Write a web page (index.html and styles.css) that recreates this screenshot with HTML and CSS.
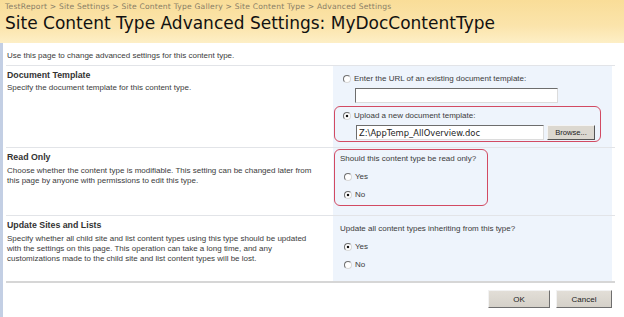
FILE: index.html
```html
<!DOCTYPE html>
<html lang="en">
<head>
    <meta charset="UTF-8">
    <title>Site Content Type Advanced Settings</title>
    <link rel="stylesheet" href="styles.css">
</head>
<body>
    <div class="header">
        <div class="crumbs">TestReport &gt; Site Settings &gt; Site Content Type Gallery &gt; Site Content Type &gt; Advanced Settings</div>
        <h1>Site Content Type Advanced Settings: MyDocContentType</h1>
    </div>

    <div class="main">
        <p class="intro">Use this page to change advanced settings for this content type.</p>

        <div class="section sec-template">
            <div class="label">
                <h3>Document Template</h3>
                <p>Specify the document template for this content type.</p>
            </div>
            <div class="control">
                <label class="opt"><input type="radio" name="tpl"> Enter the URL of an existing document template:</label>
                <div class="field-row"><input class="text url" type="text"></div>
                <div class="callout callout-upload">
                    <label class="opt"><input type="radio" name="tpl" checked> Upload a new document template:</label>
                    <div class="field-row">
                        <input class="text file" type="text" value="Z:\AppTemp_AllOverview.doc">
                        <button class="browse">Browse...</button>
                    </div>
                </div>
            </div>
        </div>

        <div class="section sec-readonly">
            <div class="label">
                <h3>Read Only</h3>
                <p>Choose whether the content type is modifiable. This setting can be changed later from this page by anyone with permissions to edit this type.</p>
            </div>
            <div class="control">
                <div class="callout callout-readonly">
                    <div class="question">Should this content type be read only?</div>
                    <label class="opt"><input type="radio" name="ro"> Yes</label>
                    <label class="opt"><input type="radio" name="ro" checked> No</label>
                </div>
            </div>
        </div>

        <div class="section sec-update">
            <div class="label">
                <h3>Update Sites and Lists</h3>
                <p>Specify whether all child site and list content types using this type should be updated with the settings on this page. This operation can take a long time, and any customizations made to the child site and list content types will be lost.</p>
            </div>
            <div class="control">
                <div class="question">Update all content types inheriting from this type?</div>
                <label class="opt"><input type="radio" name="upd" checked> Yes</label>
                <label class="opt"><input type="radio" name="upd"> No</label>
            </div>
        </div>

        <div class="actions">
            <button class="btn ok">OK</button>
            <button class="btn cancel">Cancel</button>
        </div>
    </div>
</body>
</html>
```

FILE: styles.css
```css
* {
    margin: 0;
    padding: 0;
    box-sizing: border-box;
}

body {
    font-family: 'Liberation Sans', Arial, sans-serif;
    font-size: 8px;
    color: #3b3b3b;
    background: #ffffff;
    width: 624px;
    height: 317px;
    overflow: hidden;
}

/* page title band */
.header {
    height: 43px;
    padding: 2px 0 0 5px;
    background: linear-gradient(#f9dd98 0%, #fbe4ab 60%, #fdefc6 100%);
}

.crumbs {
    font-family: 'DejaVu Sans', Verdana, sans-serif;
    font-size: 7.6px;
    letter-spacing: 0.2px;
    color: #8a7e66;
    line-height: 10px;
}

h1 {
    font-family: 'DejaVu Sans', Verdana, sans-serif;
    font-size: 17px;
    font-weight: normal;
    color: #111111;
    line-height: 22px;
    margin-top: 0;
}

.main {
    border-left: 3px solid #c3cfe4;
    padding-left: 3px;
    width: 615px;
    height: 274px;
}

.intro {
    height: 22px;
    padding-top: 8px;
    padding-left: 1px;
    line-height: 10px;
}

.section {
    display: grid;
    grid-template-columns: 327px 279px;
    border-top: 1px solid #e2e4e8;
}

.sec-template {
    height: 82px;
}

.sec-readonly {
    height: 68px;
}

.sec-update {
    height: 68px;
    border-bottom: 2px solid #d6d6d6;
}

.label {
    padding: 4px 16px 0 1px;
}

.label h3 {
    font-size: 8.8px;
    font-weight: bold;
    color: #333333;
    line-height: 10px;
    margin-bottom: 3px;
}

.label p {
    line-height: 10px;
}

.sec-readonly .label h3,
.sec-update .label h3 {
    margin-bottom: 4px;
}

.control {
    background: #eef4fc;
}

.sec-template .control {
    padding: 8px 12px 0 1px;
}

.opt {
    display: flex;
    align-items: center;
    gap: 3px;
    height: 10px;
    line-height: 10px;
}

.sec-template .opt {
    margin-left: 9px;
}

.field-row {
    display: flex;
    align-items: center;
    gap: 3px;
    margin: 4px 0 0 21px;
}

/* classic windows style radio */
.opt input {
    appearance: none;
    -webkit-appearance: none;
    width: 8px;
    height: 8px;
    border-radius: 50%;
    border: 1px solid;
    border-color: #6f6f6f #d8d8d8 #d8d8d8 #6f6f6f;
    background: #ffffff;
    flex: none;
}

.opt input:checked {
    background: radial-gradient(circle, #111111 0 1.4px, #ffffff 1.6px);
}

.text {
    height: 15px;
    border: 1px solid;
    border-color: #6d6d6d #dcdcdc #dcdcdc #6d6d6d;
    background: #ffffff;
    font-family: 'DejaVu Sans', Verdana, sans-serif;
    font-size: 8.4px;
    color: #222222;
    padding-left: 2px;
    outline: none;
}

.url {
    width: 203px;
}

.file {
    width: 188px;
}

.browse {
    width: 48px;
    height: 15px;
    font-family: 'Liberation Sans', Arial, sans-serif;
    font-size: 7.6px;
    color: #222222;
    background: #dcd8d0;
    border: 1px solid;
    border-color: #f4f4f4 #555555 #555555 #f4f4f4;
}

.callout {
    border: 1.3px solid #d24a62;
    border-radius: 6px;
}

.callout-upload {
    margin-top: 3px;
    width: 267px;
    height: 36px;
    padding-top: 4px;
}

.callout-upload .opt {
    margin-left: 8px;
}

.callout-upload .field-row {
    margin-left: 21px;
}

.callout-readonly {
    width: 154px;
    height: 57px;
    margin: 1px 0 0 1px;
    padding: 4px 0 0 5px;
}

.question {
    line-height: 10px;
}

.callout-readonly .opt,
.sec-update .opt {
    margin-left: 4px;
    margin-top: 8px;
}

.sec-update .control {
    padding: 8px 0 0 7px;
}

.sec-update .question {
    margin-bottom: 1px;
}

.actions {
    display: flex;
    justify-content: flex-end;
    gap: 6px;
    padding: 7px 0 0 0;
    width: 606px;
}

.btn {
    height: 18px;
    font-family: 'Liberation Sans', Arial, sans-serif;
    font-size: 8px;
    color: #222222;
    background: linear-gradient(#e2ded7, #d5d1c9);
    border: 1px solid;
    border-color: #f2f2f2 #6e6e6e #6e6e6e #f2f2f2;
}

.ok {
    width: 62px;
}

.cancel {
    width: 56px;
}
```
